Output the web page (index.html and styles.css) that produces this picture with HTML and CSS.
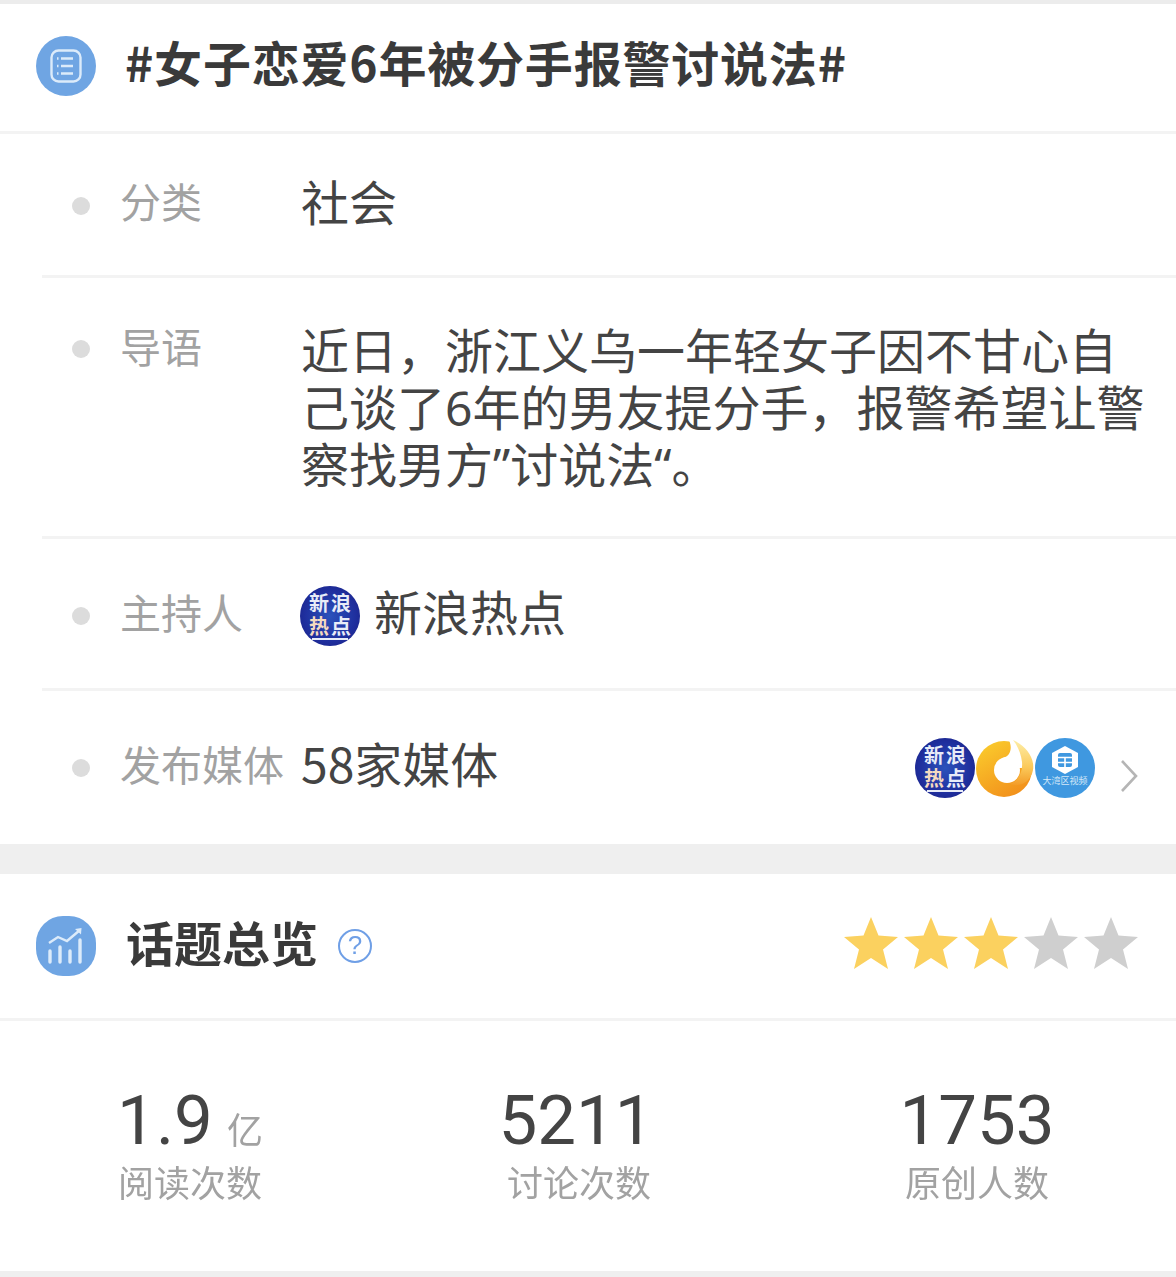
FILE: index.html
```html
<!DOCTYPE html>
<html lang="zh">
<head>
    <meta charset="UTF-8">
    <title>话题详情</title>
    <link rel="stylesheet" href="styles.css">
</head>
<body>
    <div class="page">
        <section class="card">
            <div class="head head-topic">
                <svg class="head-icon" viewBox="0 0 60 60">
                    <circle cx="30" cy="30" r="30" fill="#6fa5e3"/>
                    <rect x="15.500" y="14.500" width="29" height="31" rx="7" fill="none" stroke="#dcebfa" stroke-width="2.400"/>
                    <path d="M25 22.500h12M25 30h12M25 37.500h12" stroke="#dcebfa" stroke-width="2.400"/>
                    <path d="M21 22.500h1.500M21 30h1.500M21 37.500h1.500" stroke="#dcebfa" stroke-width="2.400"/>
                </svg>
                <h1 class="title title-topic">#女子恋爱6年被分手报警讨说法#</h1>
            </div>
            <div class="row row-cat">
                <i class="dot"></i>
                <span class="label">分类</span>
                <span class="value">社会</span>
            </div>
            <div class="row row-intro">
                <i class="dot"></i>
                <span class="label">导语</span>
                <p class="value intro">近日，浙江义乌一年轻女子因不甘心自己谈了6年的男友提分手，报警希望让警察找男方”讨说法“。</p>
            </div>
            <div class="row row-host">
                <i class="dot"></i>
                <span class="label">主持人</span>
                <div class="avatar sina host-avatar"><span>新</span><span>浪</span><span class="hot">热</span><span>点</span></div>
                <span class="value">新浪热点</span>
            </div>
            <div class="row row-media">
                <i class="dot"></i>
                <span class="label">发布媒体</span>
                <span class="value">58家媒体</span>
                <div class="avatars">
                    <div class="avatar sina"><span>新</span><span>浪</span><span class="hot">热</span><span>点</span></div>
                    <svg class="avatar" viewBox="0 0 60 60">
                        <defs>
                            <linearGradient id="ring" x1="0" y1="0" x2="0.6" y2="1">
                                <stop offset="0" stop-color="#fbd02e"/>
                                <stop offset="1" stop-color="#f2921c"/>
                            </linearGradient>
                            <linearGradient id="flame" x1="0" y1="0" x2="0" y2="1">
                                <stop offset="0" stop-color="#fdeea8"/>
                                <stop offset="0.6" stop-color="#fbc95a"/>
                                <stop offset="1" stop-color="#f39c28"/>
                            </linearGradient>
                        </defs>
                        <circle cx="29" cy="31" r="28" fill="url(#ring)"/>
                        <path d="M28 20C36 18 38 9 33 0h27v30H44z" fill="#fff"/>
                        <circle cx="32" cy="32" r="13" fill="#fff"/>
                        <path d="M38 2c12 5 22 17 20 30-2 11-12 18-23 14 8-3 13-12 12-22-1-8-4-16-9-22z" fill="url(#flame)"/>
                    </svg>
                    <div class="avatar bay">
                        <svg class="bay-mark" viewBox="0 0 30 30">
                            <path d="M15 1l13 7v14l-13 7-13-7V8z" fill="#fff"/>
                            <rect x="8" y="8" width="14" height="14" rx="2" fill="#3f98e0"/>
                            <path d="M8 12.500h14M8 17.500h14M15 12.500v9.500" stroke="#fff" stroke-width="1.600" fill="none"/>
                        </svg>
                        <span class="bay-name">大湾区视频</span>
                    </div>
                </div>
                <svg class="chevron" viewBox="0 0 18 34">
                    <path d="M2 2l14 15L2 32" fill="none" stroke="#b5b5b5" stroke-width="2.600"/>
                </svg>
            </div>
        </section>

        <section class="card card-overview">
            <div class="head head-overview">
                <svg class="head-icon" viewBox="0 0 60 60">
                    <rect width="60" height="60" rx="27" fill="#6fa5e3"/>
                    <path d="M14 46V35M24 46V31M34 46V35M44 46V24" stroke="#dcebfa" stroke-width="3.400" stroke-linecap="round"/>
                    <path d="M13 27l9-6 9 4 13-11" fill="none" stroke="#dcebfa" stroke-width="2.400"/>
                    <path d="M39 13l6.500-1-.5 6.500z" fill="#dcebfa"/>
                </svg>
                <h2 class="title">话题总览</h2>
                <span class="help">?</span>
                <div class="stars">
                    <svg class="star on" viewBox="0 0 54 52"><path d="M27 0l7.500 18.500L54 20 39 32.500 44 52 27 41 10 52l5-19.500L0 20l19.500-1.500z"/></svg>
                    <svg class="star on" viewBox="0 0 54 52"><path d="M27 0l7.500 18.500L54 20 39 32.500 44 52 27 41 10 52l5-19.500L0 20l19.500-1.500z"/></svg>
                    <svg class="star on" viewBox="0 0 54 52"><path d="M27 0l7.500 18.500L54 20 39 32.500 44 52 27 41 10 52l5-19.500L0 20l19.500-1.500z"/></svg>
                    <svg class="star" viewBox="0 0 54 52"><path d="M27 0l7.500 18.500L54 20 39 32.500 44 52 27 41 10 52l5-19.500L0 20l19.500-1.500z"/></svg>
                    <svg class="star" viewBox="0 0 54 52"><path d="M27 0l7.500 18.500L54 20 39 32.500 44 52 27 41 10 52l5-19.500L0 20l19.500-1.500z"/></svg>
                </div>
            </div>
            <div class="stats">
                <div class="stat">
                    <div class="num">1.9 <small>亿</small></div>
                    <div class="stat-label">阅读次数</div>
                </div>
                <div class="stat">
                    <div class="num num-mid">5211</div>
                    <div class="stat-label">讨论次数</div>
                </div>
                <div class="stat">
                    <div class="num">1753</div>
                    <div class="stat-label">原创人数</div>
                </div>
            </div>
        </section>
    </div>
</body>
</html>
```

FILE: styles.css
```css
* {
    box-sizing: border-box;
}
body {
    margin: 0;
    background-color: #fff;
    font-family: "Noto Sans CJK SC", "Noto Sans", sans-serif;
    color: #444;
}
.page {
    width: 1176px;
    height: 1277px;
    overflow: hidden;
    filter: blur(0.7px);
}
.card {
    background-color: #fff;
    border-top: 4px solid #ececec;
}
.card-overview {
    margin-top: 3px;
    border-top: 30px solid #efefef;
    border-bottom: 7px solid #efefef;
}
.head {
    display: flex;
    align-items: center;
    height: 130px;
    padding-left: 36px;
    border-bottom: 3px solid #f3f3f3;
}
.head-topic {
    padding-bottom: 3px;
}
.head-overview {
    height: 147px;
    padding-right: 38px;
}
.head-icon {
    width: 60px;
    height: 60px;
    flex: none;
}
.title {
    margin: 0 0 10px 30px;
    font-size: 48px;
    font-weight: 700;
    line-height: 60px;
    color: #3a3a3a;
}
.title-topic {
    margin-left: 29px;
    letter-spacing: 0.8px;
}
.help {
    width: 34px;
    height: 34px;
    margin-left: 20px;
    border: 2.500px solid #6f9fe6;
    border-radius: 50%;
    font-family: "Liberation Sans", sans-serif;
    font-size: 26px;
    line-height: 29px;
    text-align: center;
    color: #6f9fe6;
}
.stars {
    display: flex;
    gap: 6px;
    margin-left: auto;
    margin-bottom: 6px;
}
.star {
    width: 54px;
    height: 52px;
    fill: #cfcfcf;
}
.star.on {
    fill: #fbd15f;
}
.row {
    display: flex;
    align-items: center;
    margin-left: 42px;
    padding-left: 30px;
    padding-right: 38px;
    border-bottom: 3px solid #f3f3f3;
}
.row-cat {
    height: 144px;
    padding-top: 2px;
}
.row-intro {
    height: 261px;
    align-items: flex-start;
    padding-top: 44px;
}
.row-host {
    height: 152px;
    padding-top: 5px;
}
.row-media {
    height: 150px;
    padding-top: 4px;
    border-bottom: none;
}
.dot {
    width: 18px;
    height: 18px;
    flex: none;
    margin-right: 30px;
    border-radius: 50%;
    background-color: #dcdcdc;
}
.row-intro .dot {
    margin-top: 18px;
}
.label {
    width: 181px;
    flex: none;
    padding-bottom: 11px;
    font-size: 41px;
    line-height: 54px;
    color: #a2a2a2;
    white-space: nowrap;
}
.row-intro .label {
    margin-top: -4px;
}
.value {
    padding-bottom: 11px;
    font-size: 48px;
    line-height: 57px;
    color: #444;
    white-space: nowrap;
}
.intro {
    width: 850px;
    margin: 0;
    padding-bottom: 0;
    flex: none;
    font-family: "Noto Sans", "Noto Sans CJK SC", sans-serif;
    white-space: normal;
}
.avatar {
    width: 60px;
    height: 60px;
    flex: none;
    border-radius: 50%;
}
.sina {
    display: grid;
    grid-template-columns: 22px 22px;
    grid-auto-rows: 23px;
    justify-content: center;
    align-content: center;
    background:
        linear-gradient(#e8ecf8, #e8ecf8) no-repeat center 52px / 36px 2px,
        radial-gradient(circle, #2b52bb 0%, #1f2f9e 60%, #191c7c 100%);
    font-family: "Liberation Sans", "Noto Sans CJK SC", sans-serif;
    font-size: 20px;
    font-weight: 700;
    line-height: 23px;
    text-align: center;
    color: #e8ecf8;
}
.hot {
    color: #f4d9c0;
}
.host-avatar {
    margin-left: -1px;
    margin-right: 14px;
}
.avatars {
    display: flex;
    margin-left: auto;
}
.bay {
    display: flex;
    flex-direction: column;
    align-items: center;
    padding-top: 7px;
    overflow: hidden;
    background-color: #3f98e0;
}
.bay-mark {
    width: 30px;
    height: 30px;
}
.bay-name {
    font-size: 9px;
    line-height: 12px;
    color: #d4e8f8;
    white-space: nowrap;
}
.chevron {
    width: 18px;
    height: 34px;
    flex: none;
    margin-left: 25px;
    margin-top: 16px;
}
.stats {
    display: grid;
    grid-template-columns: 389px 398px auto;
    height: 250px;
    padding-left: 118px;
    padding-top: 62px;
}
.stat {
    width: 144px;
    text-align: center;
    white-space: nowrap;
}
.num {
    display: flex;
    justify-content: center;
    align-items: baseline;
    font-family: Roboto, sans-serif;
    font-size: 69px;
    line-height: 76px;
    color: #444;
}
.num-mid {
    padding-right: 6px;
}
.num small {
    margin-left: 14px;
    font-family: "Noto Sans CJK SC", sans-serif;
    font-size: 36px;
    line-height: 36px;
    color: #a2a2a2;
}
.stat-label {
    margin-top: 1px;
    font-family: "Liberation Sans", "Noto Sans CJK SC", sans-serif;
    font-size: 36px;
    line-height: 50px;
    color: #a2a2a2;
}
```
